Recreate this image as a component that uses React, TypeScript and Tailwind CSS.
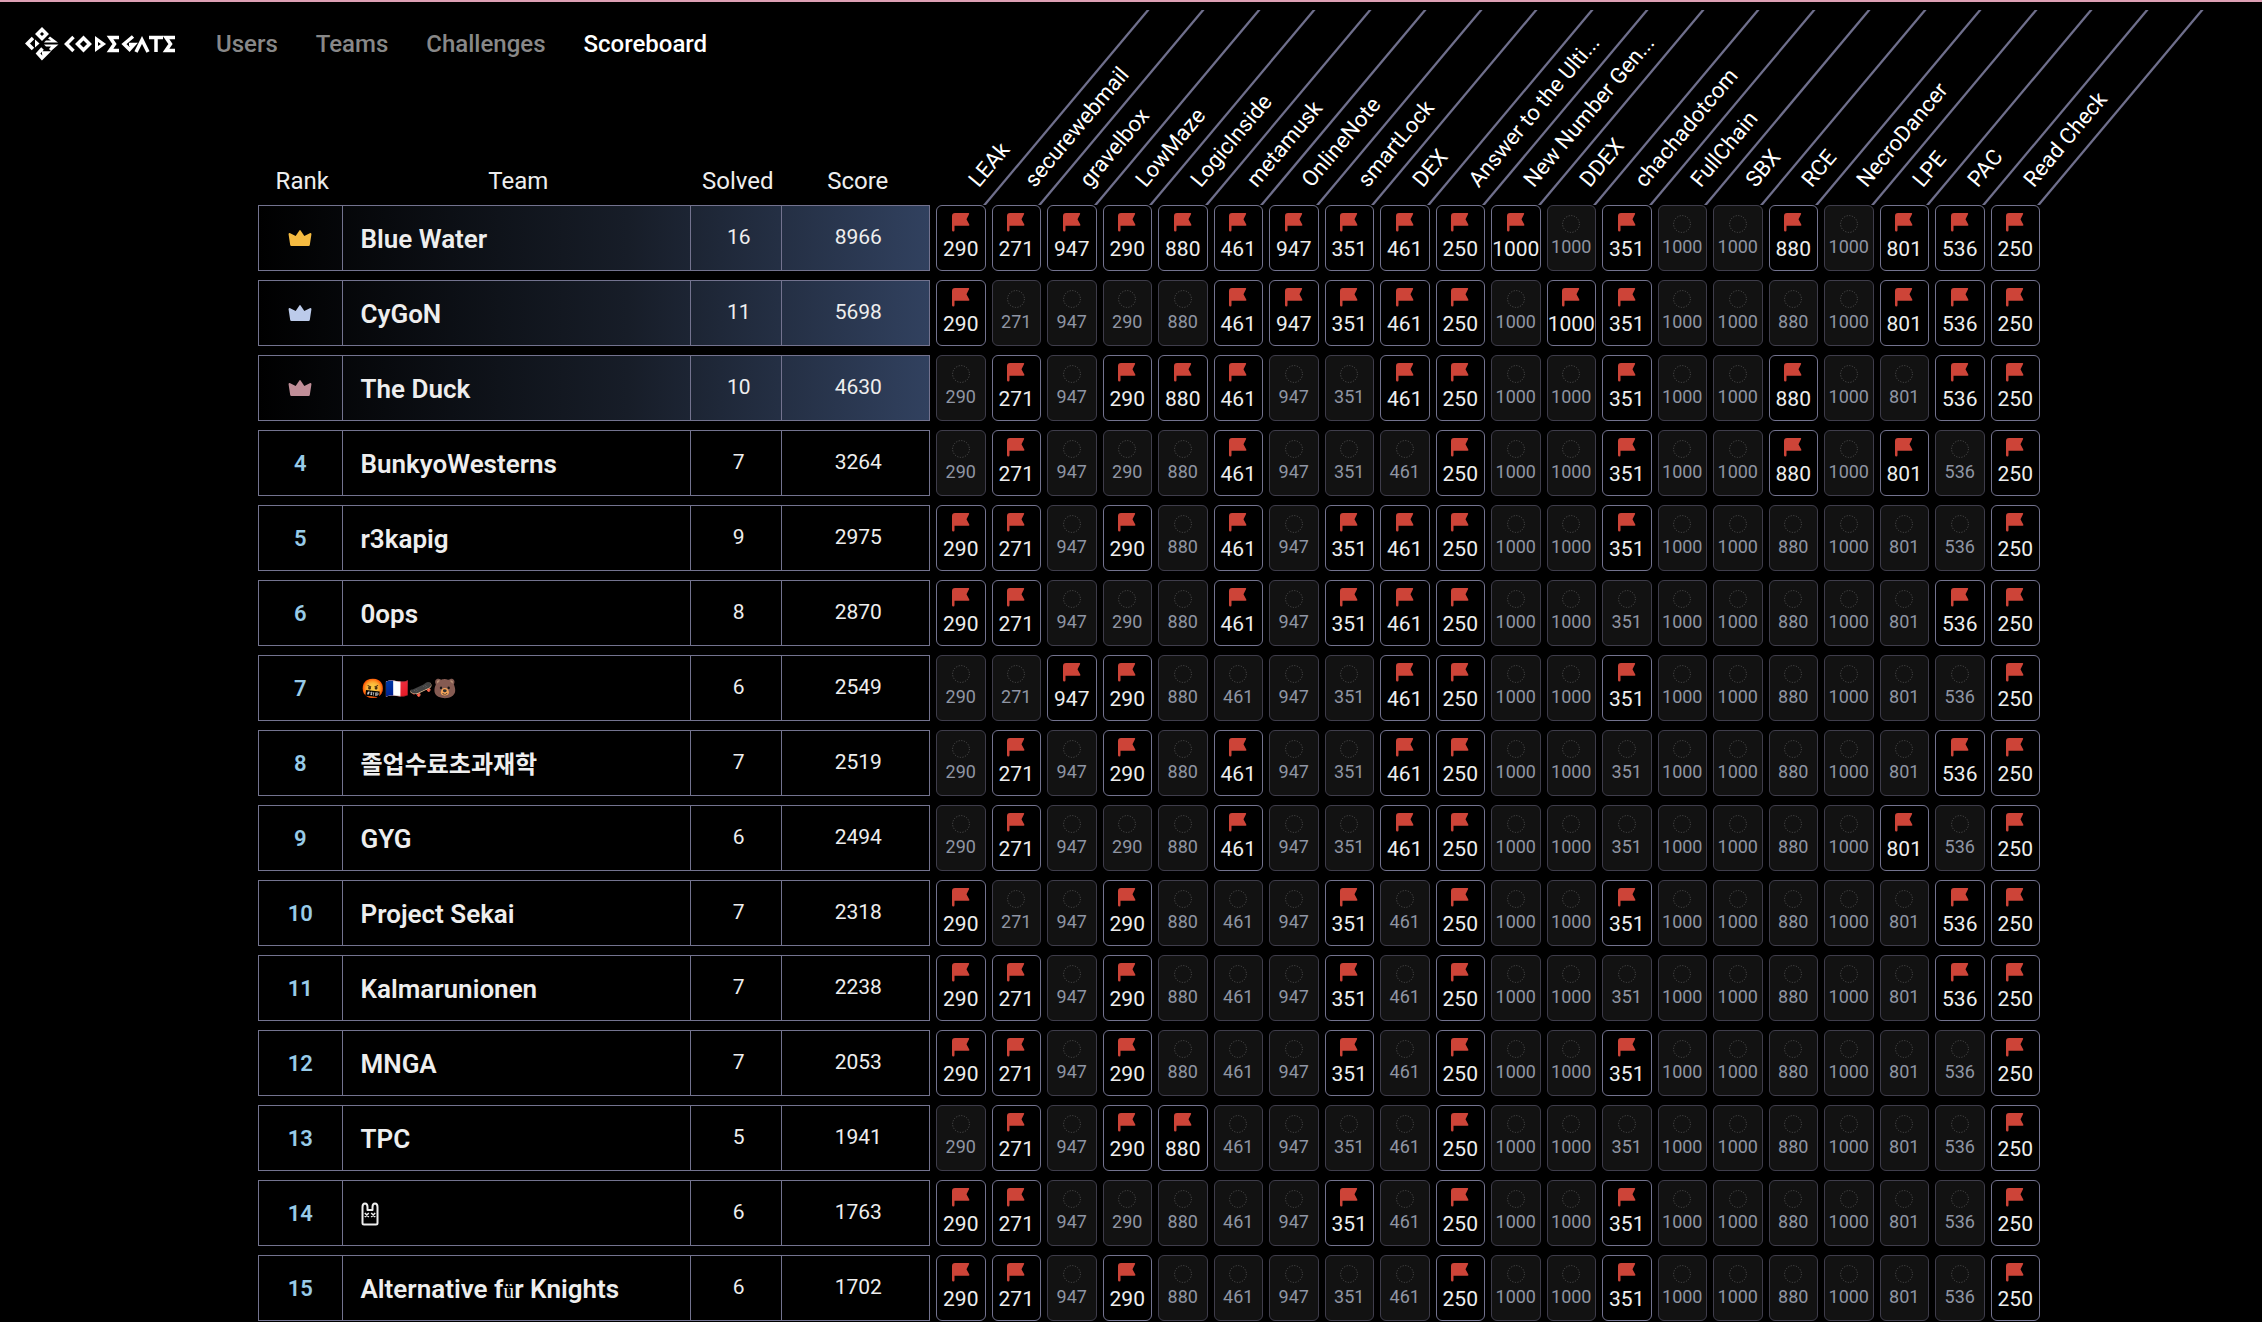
import type { ReactNode } from "react";

const CHALLENGES: { name: string; points: number }[] = [
  { name: "LEAk", points: 290 },
  { name: "securewebmail", points: 271 },
  { name: "gravelbox", points: 947 },
  { name: "LowMaze", points: 290 },
  { name: "LogicInside", points: 880 },
  { name: "metamusk", points: 461 },
  { name: "OnlineNote", points: 947 },
  { name: "smartLock", points: 351 },
  { name: "DEX", points: 461 },
  { name: "Answer to the Ulti...", points: 250 },
  { name: "New Number Gen...", points: 1000 },
  { name: "DDEX", points: 1000 },
  { name: "chachadotcom", points: 351 },
  { name: "FullChain", points: 1000 },
  { name: "SBX", points: 1000 },
  { name: "RCE", points: 880 },
  { name: "NecroDancer", points: 1000 },
  { name: "LPE", points: 801 },
  { name: "PAC", points: 536 },
  { name: "Read Check", points: 250 },
];

type Team = { name: ReactNode; solved: number; score: number; flags: string };

// One character per challenge: "1" is solved, "0" is not.
const TEAMS: Team[] = [
  { name: "Blue Water", solved: 16, score: 8966, flags: "11111111111010010111" },
  { name: "CyGoN", solved: 11, score: 5698, flags: "10000111110110000111" },
  { name: "The Duck", solved: 10, score: 4630, flags: "01011100110010010011" },
  { name: "BunkyoWesterns", solved: 7, score: 3264, flags: "01000100010010010101" },
  { name: "r3kapig", solved: 9, score: 2975, flags: "11010101110010000001" },
  { name: "0ops", solved: 8, score: 2870, flags: "11000101110000000011" },
  { name: <span className="block text-[19px]">🤬🇫🇷🛹🐻</span>, solved: 6, score: 2549, flags: "00110000110010000001" },
  { name: <span className="text-2xl">졸업수료초과재학</span>, solved: 7, score: 2519, flags: "01010100110000000011" },
  { name: "GYG", solved: 6, score: 2494, flags: "01000100110000000101" },
  { name: "Project Sekai", solved: 7, score: 2318, flags: "10010001010010000011" },
  { name: "Kalmarunionen", solved: 7, score: 2238, flags: "11010001010000000011" },
  { name: "MNGA", solved: 7, score: 2053, flags: "11010001010010000001" },
  { name: "TPC", solved: 5, score: 1941, flags: "01011000010000000001" },
  { name: <Bunny />, solved: 6, score: 1763, flags: "11000001010010000001" },
  {
    name: (
      <>
        Alternative f<span className="font-['Liberation_Serif'] text-[22px] font-normal">ü</span>r Knights
      </>
    ),
    solved: 6,
    score: 1702,
    flags: "11010000010010000001",
  },
];

const CROWNS = ["text-[#f5bb41]", "text-[#bccbea]", "text-[#c08e98]"];

const ROW = "grid grid-cols-[169fr_695fr_183fr_297fr_repeat(20,minmax(0,111fr))]";

function Crown({ className }: { className: string }) {
  return (
    <svg viewBox="0 0 24 16" className={"h-4 w-6 " + className} fill="currentColor" aria-hidden="true">
      <path d="M11.200.700Q12-.6 12.800.700L16 5.500Q16.500 6.200 17.300 5.600L21.800 3.200Q23.600 2.600 23.400 4.600L21.800 15Q21.600 16 20.600 16H3.400Q2.400 16 2.200 15L.6 4.600Q.4 2.600 2.200 3.200L6.700 5.600Q7.500 6.200 8 5.500Z" />
    </svg>
  );
}

function Bunny() {
  return (
    <svg viewBox="0 0 18 24" className="h-6 w-[18px]" fill="none" stroke="#eeeeee" role="img" aria-label="Bunny">
      <path strokeWidth="2" strokeLinejoin="round" d="M1.500 21V5Q1.500 1.500 4 1.500T6.500 5V8H11.500V5Q11.500 1.500 14 1.500T16.500 5V21Q16.500 22.500 15 22.500H3Q1.500 22.500 1.500 21Z" />
      <path strokeWidth="1.500" d="M3.800 11 7.800 15M7.800 11 3.800 15M10.200 11 14.200 15M14.200 11 10.200 15" />
    </svg>
  );
}

function Flag() {
  return (
    <svg viewBox="0 0 18 19" className="h-[19px] w-[18px] text-[#cd4438]" fill="currentColor" aria-hidden="true">
      <path d="M0 3Q0 0 3 0H16.500Q17.600 0 17 1.200L14.500 6.200 17.300 11.500Q17.800 12.700 16.500 12.700H2.500V17.300Q2.500 18.500 1.300 18.500T0 17.300Z" />
    </svg>
  );
}

function Unsolved() {
  return (
    <svg viewBox="0 0 18 18" className="size-[18px]" aria-hidden="true">
      <circle cx="9" cy="9" r="8.400" fill="none" stroke="#505050" strokeWidth="1" strokeDasharray="1.100 1.540" />
    </svg>
  );
}

function Logo() {
  return (
    <svg viewBox="0 0 152 34" className="h-[34px] w-[152px]" role="img" aria-label="CODEGATE">
      <g fill="none" stroke="#fff" strokeWidth="3.500">
        <path d="M18 2.500 22.500 7 18 11.500 13.500 7Z" />
        <path d="M9 11 3.500 16.500 9 22" />
        <path d="M18.500 21.500 14 26.500 18 31 23 26H18" />
        <path d="M49.500 10 42.500 17 49.500 24" />
        <path d="M59.500 11 65.500 17 59.500 23 53.500 17Z" />
        <path strokeWidth="3" d="M72.500 12V22L79.500 17Z" />
        <path d="M95 10.500H86L90.500 17 86 23.500H95" />
        <path d="M109 9.500 100 17 105.500 22.500 110 17.500H105" />
        <path d="M112 25 118 13 124 25" />
        <path d="M125 10.500H139M132 10V25" />
        <path d="M151 10.500H142L146.500 17 142 23.500H151" />
      </g>
      <g fill="#fff">
        <path d="M11 12.500 15.500 16.500 11 20.500Z" />
        <path d="M26 9.500 34 15.500H20L22 13.500H27L24 11.500Z" />
        <path d="M20 17.500H34.500L27 24 25 22 27 19.500H22Z" />
      </g>
    </svg>
  );
}

export default function App() {
  return (
    <div className="min-h-screen overflow-hidden border-t-2 border-[#dda0b4] bg-black font-['Roboto','Noto_Sans_CJK_KR',sans-serif] text-[#eeeeee]">
      <nav className="flex h-[84px] items-center gap-10 pl-6">
        <a href="#home"><Logo /></a>
        <div className="flex gap-[38px] text-2xl font-medium text-[#888888]">
          <a href="#users">Users</a>
          <a href="#teams">Teams</a>
          <a href="#challenges">Challenges</a>
          <a href="#scoreboard" className="text-white">Scoreboard</a>
        </div>
      </nav>
      <table className="mr-[222px] ml-[258px] block">
        <thead className="block">
          <tr className={ROW + " h-[119px]"}>
            {["Rank", "Team", "Solved", "Score"].map((label) => (
              <th key={label} scope="col" className="self-end pb-2 pl-1 text-2xl font-normal">{label}</th>
            ))}
            {CHALLENGES.map((c) => (
              <th key={c.name} scope="col" className="relative font-normal">
                <span className="absolute right-0 bottom-0 h-[195px] w-[3px] origin-bottom -skew-x-[40deg] bg-[#6f6f8c]" />
                <span className="absolute bottom-3 left-[54px] origin-bottom-left -rotate-50 text-[22px] leading-7 whitespace-nowrap text-white">{c.name}</span>
              </th>
            ))}
          </tr>
        </thead>
        <tbody className="flex flex-col gap-[9px]">
          {TEAMS.map((team, i) => (
            <tr
              key={i}
              className={
                ROW + " h-[66px] " +
                (i < 3
                  ? "bg-linear-to-r/srgb from-black via-[#171d28] via-55% to-[#31415f] bg-[length:calc(100%*1344/3564)_100%] bg-no-repeat"
                  : "")
              }
            >
              <td className="flex items-center justify-center border border-[#73738f] text-[22px] font-semibold text-[#98cbe8]">
                {i < 3 ? <Crown className={CROWNS[i]} /> : i + 1}
              </td>
              <td className="flex items-center border-y border-[#73738f] pt-0.5 pl-[18px] text-[26px] font-semibold whitespace-nowrap">
                <span>{team.name}</span>
              </td>
              <td className="flex items-center justify-center border border-[#73738f] pl-1.5 text-[21px]">{team.solved}</td>
              <td className="flex items-center justify-center border border-l-0 border-[#73738f] pl-1.5 text-[21px]">{team.score}</td>
              {CHALLENGES.map((c, n) => (
                <td key={c.name} className="pl-1.5">
                  {team.flags[n] === "1" ? (
                    <div className="flex h-full flex-col items-center rounded-md border border-[#73738f] bg-black pt-[7px] text-[21px]">
                      <Flag />
                      <span className="mt-[3px] leading-7">{c.points}</span>
                    </div>
                  ) : (
                    <div className="flex h-full flex-col items-center rounded-md border border-[#3f3d4b] bg-[#121212] pt-[9px] text-lg text-[#8f95a3]">
                      <Unsolved />
                      <span className="leading-7">{c.points}</span>
                    </div>
                  )}
                </td>
              ))}
            </tr>
          ))}
        </tbody>
      </table>
    </div>
  );
}
